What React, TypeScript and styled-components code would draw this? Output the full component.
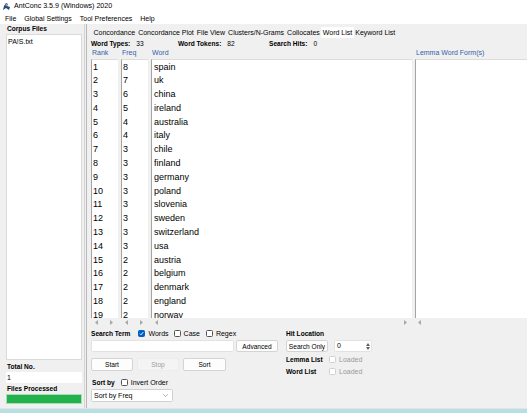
import React from 'react'
import styled, { createGlobalStyle } from 'styled-components'

const GlobalStyle = createGlobalStyle`
    html, body {
        margin: 0;
        padding: 0;
        background: #f0f0f0;
    }
    body {
        font-family: "Liberation Sans", Arial, sans-serif;
        color: #000;
    }
`

const Window = styled.div`
    width: 527px;
    height: 413px;
    display: flex;
    flex-direction: column;
    overflow: hidden;
    background: #f0f0f0;
`

const TitleBar = styled.div`
    height: 12px;
    background: #fff;
    display: flex;
    align-items: center;
    gap: 3px;
    padding-left: 2px;
    font-size: 7.1px;
`

const MenuBar = styled.div`
    height: 12px;
    background: #fff;
    display: flex;
    align-items: center;
    padding-left: 5px;
    font-size: 7px;
`

const MenuItem = styled.span`
    margin-right: 8px;
`

const Main = styled.div`
    height: 384px;
    display: flex;
`

const LeftPanel = styled.div`
    width: 84px;
    flex: none;
    display: flex;
    flex-direction: column;
    padding: 0 2px 4px 6px;
    box-sizing: border-box;
`

const Splitter = styled.div`
    width: 3px;
    flex: none;
    border-left: 1px solid #d4d4d4;
    border-right: 1px solid #b8b8b8;
    box-sizing: border-box;
`

const BoldLabel = styled.div<{ $width?: number; $pl?: number }>`
    font-weight: bold;
    font-size: 6.6px;
    white-space: nowrap;
    padding-left: ${p => p.$pl ?? 0}px;
    ${p => (p.$width ? `width: ${p.$width}px; flex: none;` : '')}
`

const PanelLabel = styled(BoldLabel)`
    height: 10px;
    line-height: 10px;
    padding-left: 1px;
`

const CorpusList = styled.div`
    flex: 1;
    background: #fff;
    border: 1px solid #dadada;
    font-size: 7px;
    padding: 3px 0 0 1px;
    margin-bottom: 2px;
`

const ValueBox = styled.div`
    height: 11px;
    background: #fff;
    font-size: 7px;
    line-height: 11px;
    padding-left: 1px;
    margin-bottom: 1px;
`

const ProgressBar = styled.div`
    height: 10px;
    background: #22b14c;
    border: 1px solid #a8dcb2;
    box-sizing: border-box;
`

const RightPanel = styled.div`
    flex: 1;
    min-width: 0;
    display: flex;
    flex-direction: column;
    padding-left: 4px;
`

const Tabs = styled.div`
    height: 14px;
    display: flex;
    align-items: flex-end;
    font-size: 7px;
    margin-left: 1px;
`

const Tab = styled.div<{ $active?: boolean }>`
    height: 11px;
    line-height: 11px;
    padding: 0 1.5px;
    background: ${p => (p.$active ? '#fff' : 'transparent')};
`

const Stats = styled.div`
    height: 10px;
    display: flex;
    align-items: center;
`

const Stat = styled.div<{ $width: number }>`
    width: ${p => p.$width}px;
    flex: none;
    display: flex;
    align-items: center;
    gap: 6px;
    font-size: 6.6px;
`

const Columns = styled.div`
    flex: 1;
    display: flex;
    gap: 3px;
    min-height: 0;
`

const Column = styled.div<{ $width?: number }>`
    display: flex;
    flex-direction: column;
    ${p => (p.$width ? `width: ${p.$width}px; flex: none;` : 'flex: 1; min-width: 0;')}
`

const ColumnHeader = styled.div`
    height: 11px;
    line-height: 10px;
    font-size: 7px;
    color: #3560a8;
    padding-left: 1px;
    white-space: nowrap;
`

const ListBox = styled.div<{ $pl?: number }>`
    flex: 1;
    background: #fff;
    border-left: 1px solid #a4a4a4;
    border-top: 1px solid #dcdcdc;
    overflow: hidden;
    padding: 0.5px 0 0 ${p => p.$pl ?? 1}px;
    font-size: 9px;
    line-height: 13.8px;
`

const ScrollRow = styled.div<{ $pl?: number }>`
    height: 9px;
    display: flex;
    align-items: center;
    justify-content: space-between;
    padding: 0 5px 0 ${p => p.$pl ?? 4}px;
`

const Arrow = ({ dir }: { dir: 'left' | 'right' }) => (
    <svg width="3" height="5" viewBox="0 0 3 5">
        <polygon points={dir === 'left' ? '3,0 0,2.5 3,5' : '0,0 3,2.5 0,5'} fill="#a8a8a8" />
    </svg>
)

const Controls = styled.div`
    height: 81px;
    display: flex;
    gap: 8px;
    padding-top: 2px;
    box-sizing: border-box;
`

const Group = styled.div<{ $width?: number }>`
    display: flex;
    flex-direction: column;
    ${p => (p.$width ? `width: ${p.$width}px;` : '')}
`

const Row = styled.div<{ $top?: number; $height?: number; $gap?: number }>`
    display: flex;
    align-items: center;
    gap: ${p => p.$gap ?? 0}px;
    margin-top: ${p => p.$top ?? 0}px;
    height: ${p => p.$height ?? 9}px;
    font-size: 7px;
`

const CheckLabel = styled.label<{ $disabled?: boolean; $ml: number }>`
    display: flex;
    align-items: center;
    gap: 3px;
    margin-left: ${p => p.$ml}px;
    color: ${p => (p.$disabled ? '#9a9a9a' : '#000')};
    font-size: 7px;
`

const Box = styled.span<{ $checked?: boolean; $disabled?: boolean }>`
    width: 7px;
    height: 7px;
    box-sizing: border-box;
    border-radius: 1.5px;
    display: inline-flex;
    align-items: center;
    justify-content: center;
    background: ${p => (p.$checked ? '#0060c0' : '#fff')};
    border: 1px solid ${p => (p.$checked ? '#0060c0' : p.$disabled ? '#d0d0d0' : '#555')};
`

const Check = ({ checked, disabled, children, ml = 8 }: { checked?: boolean; disabled?: boolean; children: React.ReactNode; ml?: number }) => (
    <CheckLabel $disabled={disabled} $ml={ml}>
        <Box $checked={checked} $disabled={disabled}>
            {checked && (
                <svg width="5" height="5" viewBox="0 0 5 5">
                    <polyline points="0.8,2.6 2,3.8 4.2,1.2" fill="none" stroke="#fff" strokeWidth="0.9" />
                </svg>
            )}
        </Box>
        {children}
    </CheckLabel>
)

const TextInput = styled.div<{ $width: number }>`
    width: ${p => p.$width}px;
    height: 12px;
    box-sizing: border-box;
    background: #fff;
    border: 1px solid #e2e2e2;
    border-radius: 1.5px;
    font-size: 7px;
    line-height: 10px;
    padding-left: 2px;
    position: relative;
`

const Button = styled.div<{ $width: number; $disabled?: boolean }>`
    width: ${p => p.$width}px;
    height: 100%;
    box-sizing: border-box;
    display: flex;
    align-items: center;
    justify-content: center;
    font-size: 6.6px;
    border-radius: 2px;
    background: ${p => (p.$disabled ? '#f4f4f4' : '#fdfdfd')};
    border: 1px solid ${p => (p.$disabled ? '#ececec' : '#d4d4d4')};
    color: ${p => (p.$disabled ? '#a0a0a0' : '#000')};
`

const Spin = styled.div`
    position: absolute;
    right: 1px;
    top: 1px;
    bottom: 1px;
    width: 5px;
    display: flex;
    flex-direction: column;
    align-items: center;
    justify-content: space-around;
`

const Select = styled.div`
    width: 82px;
    height: 13px;
    box-sizing: border-box;
    background: #fff;
    border: 1px solid #d0d0d0;
    border-radius: 1.5px;
    display: flex;
    align-items: center;
    justify-content: space-between;
    padding: 0 4px 0 2px;
    font-size: 7px;
`

const BottomStrip = styled.div`
    flex: 1;
    background: #b6e0e3;
    border-top: 1px solid #e4e4e4;
`

const rows: [string, string][] = [
    ['8', 'spain'], ['7', 'uk'], ['6', 'china'], ['5', 'ireland'], ['4', 'australia'],
    ['4', 'italy'], ['3', 'chile'], ['3', 'finland'], ['3', 'germany'], ['3', 'poland'],
    ['3', 'slovenia'], ['3', 'sweden'], ['3', 'switzerland'], ['3', 'usa'], ['2', 'austria'],
    ['2', 'belgium'], ['2', 'denmark'], ['2', 'england'], ['2', 'norway'],
]

const tabs = ['Concordance', 'Concordance Plot', 'File View', 'Clusters/N-Grams', 'Collocates', 'Word List', 'Keyword List']

const AppIcon = () => (
    <svg width="9" height="9" viewBox="0 0 9 9">
        <polygon points="1,8 2,4 4,1 6,2 5,4 8,5 7,8 4,6" fill="#2d4a72" />
        <circle cx="4.5" cy="3" r="1" fill="#8fb4dc" />
    </svg>
)

export default function App() {
    return (
        <Window>
            <GlobalStyle />
            <TitleBar>
                <AppIcon />
                <span>AntConc 3.5.9 (Windows) 2020</span>
            </TitleBar>
            <MenuBar>
                <MenuItem>File</MenuItem>
                <MenuItem>Global Settings</MenuItem>
                <MenuItem>Tool Preferences</MenuItem>
                <MenuItem>Help</MenuItem>
            </MenuBar>
            <Main>
                <LeftPanel>
                    <PanelLabel>Corpus Files</PanelLabel>
                    <CorpusList>PA!S.txt</CorpusList>
                    <PanelLabel>Total No.</PanelLabel>
                    <ValueBox>1</ValueBox>
                    <PanelLabel>Files Processed</PanelLabel>
                    <ProgressBar />
                </LeftPanel>
                <Splitter />
                <RightPanel>
                    <Tabs>
                        {tabs.map(t => (
                            <Tab key={t} $active={t === 'Word List'}>{t}</Tab>
                        ))}
                    </Tabs>
                    <Stats>
                        <Stat $width={87}><BoldLabel>Word Types:</BoldLabel>33</Stat>
                        <Stat $width={91}><BoldLabel>Word Tokens:</BoldLabel>82</Stat>
                        <Stat $width={80}><BoldLabel>Search Hits:</BoldLabel>0</Stat>
                    </Stats>
                    <Columns>
                        <Column $width={27}>
                            <ColumnHeader>Rank</ColumnHeader>
                            <ListBox>{rows.map((_, i) => <div key={i}>{i + 1}</div>)}</ListBox>
                            <ScrollRow><Arrow dir="left" /><Arrow dir="right" /></ScrollRow>
                        </Column>
                        <Column $width={27}>
                            <ColumnHeader>Freq</ColumnHeader>
                            <ListBox>{rows.map(([f], i) => <div key={i}>{f}</div>)}</ListBox>
                            <ScrollRow><Arrow dir="left" /><Arrow dir="right" /></ScrollRow>
                        </Column>
                        <Column $width={261}>
                            <ColumnHeader>Word</ColumnHeader>
                            <ListBox $pl={2}>{rows.map(([, w], i) => <div key={i}>{w}</div>)}</ListBox>
                            <ScrollRow><Arrow dir="left" /><Arrow dir="right" /></ScrollRow>
                        </Column>
                        <Column>
                            <ColumnHeader>Lemma Word Form(s)</ColumnHeader>
                            <ListBox />
                            <ScrollRow $pl={3}><Arrow dir="left" /></ScrollRow>
                        </Column>
                    </Columns>
                    <Controls>
                        <Group $width={187}>
                            <Row>
                                <BoldLabel>Search Term</BoldLabel>
                                <Check checked ml={8}>Words</Check>
                                <Check ml={5}>Case</Check>
                                <Check ml={6}>Regex</Check>
                            </Row>
                            <Row $top={2} $height={12} $gap={2}>
                                <TextInput $width={143} />
                                <Button $width={42}>Advanced</Button>
                            </Row>
                            <Row $top={6} $height={13} $gap={4}>
                                <Button $width={42}>Start</Button>
                                <Button $width={42} $disabled>Stop</Button>
                                <Button $width={43}>Sort</Button>
                            </Row>
                            <Row $top={7}>
                                <BoldLabel $pl={1}>Sort by</BoldLabel>
                                <Check ml={6}>Invert Order</Check>
                            </Row>
                            <Row $top={2} $height={13}>
                                <Select>
                                    <span>Sort by Freq</span>
                                    <svg width="5" height="3" viewBox="0 0 5 3">
                                        <polyline points="0.3,0.3 2.5,2.6 4.7,0.3" fill="none" stroke="#909090" strokeWidth="0.7" />
                                    </svg>
                                </Select>
                            </Row>
                        </Group>
                        <Group>
                            <Row>
                                <BoldLabel>Hit Location</BoldLabel>
                            </Row>
                            <Row $top={2} $height={12} $gap={6}>
                                <Button $width={42}>Search Only</Button>
                                <TextInput $width={38}>
                                    0
                                    <Spin>
                                        <svg width="4" height="3" viewBox="0 0 4 3"><polygon points="0,3 2,0 4,3" fill="#606060" /></svg>
                                        <svg width="4" height="3" viewBox="0 0 4 3"><polygon points="0,0 2,3 4,0" fill="#606060" /></svg>
                                    </Spin>
                                </TextInput>
                            </Row>
                            <Row $top={3}>
                                <BoldLabel $width={43}>Lemma List</BoldLabel>
                                <Check disabled ml={0}>Loaded</Check>
                            </Row>
                            <Row $top={3}>
                                <BoldLabel $width={43}>Word List</BoldLabel>
                                <Check disabled ml={0}>Loaded</Check>
                            </Row>
                        </Group>
                    </Controls>
                </RightPanel>
            </Main>
            <BottomStrip />
        </Window>
    )
}
